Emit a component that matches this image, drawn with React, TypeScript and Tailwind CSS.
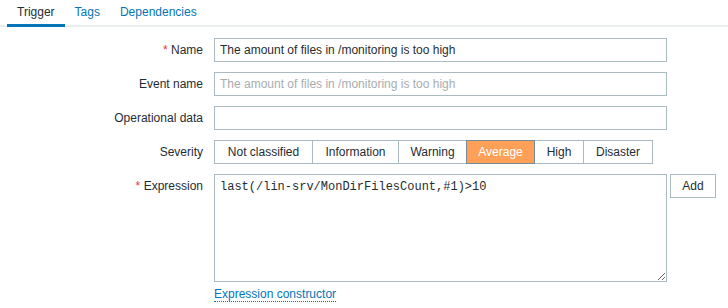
import React from "react";

const severities = [
  { label: "Not classified", w: "w-[99px]" },
  { label: "Information", w: "w-[87px]" },
  { label: "Warning", w: "w-[69px]" },
  { label: "Average", w: "w-[69px]", active: true },
  { label: "High", w: "w-[50px]" },
  { label: "Disaster", w: "w-[70px]" },
];

const Label = ({ text, required }: { text: string; required?: boolean }) => (
  <div className="w-[203px] shrink-0 text-right pt-[5px] leading-[14px]">
    {required && <span className="text-[#e33734]">* </span>}
    {text}
  </div>
);

const TextInput = ({
  value,
  placeholder,
}: {
  value?: string;
  placeholder?: string;
}) => (
  <input
    className="w-[453px] h-[24px] border border-[#acbbc2] bg-white px-[5px] text-[12px] text-[#1f2c33] outline-none placeholder:text-[#a7adb0]"
    style={{ fontFamily: "inherit" }}
    defaultValue={value}
    placeholder={placeholder}
    readOnly
  />
);

export default function App() {
  return (
    <div
      className="w-[728px] h-[308px] bg-white text-[12px] text-[#1f2c33] overflow-hidden"
      style={{ fontFamily: '"Liberation Sans", Arial, sans-serif' }}
    >
      <div className="flex h-[27px] border-b-2 border-[#ebeef0] pl-[7px]">
        <div className="px-[10px] pt-[5px] leading-[14px] border-b-[3px] border-[#0275b8] -mb-[2px]">
          Trigger
        </div>
        <div className="px-[10px] pt-[5px] leading-[14px] text-[#0275b8]">
          Tags
        </div>
        <div className="px-[10px] pt-[5px] leading-[14px] text-[#0275b8]">
          Dependencies
        </div>
      </div>

      <div className="flex flex-col gap-[10px] pt-[11px]">
        <div className="flex items-start gap-[11px]">
          <Label text="Name" required />
          <TextInput value="The amount of files in /monitoring is too high" />
        </div>
        <div className="flex items-start gap-[11px]">
          <Label text="Event name" />
          <TextInput placeholder="The amount of files in /monitoring is too high" />
        </div>
        <div className="flex items-start gap-[11px]">
          <Label text="Operational data" />
          <TextInput />
        </div>
        <div className="flex items-start gap-[11px]">
          <Label text="Severity" />
          <div className="flex">
            {severities.map((s, i) => (
              <div
                key={s.label}
                className={`${s.w} h-[24px] flex items-center justify-center border ${
                  i > 0 ? "-ml-px" : ""
                } ${
                  s.active
                    ? "bg-[#ffa059] border-[#768d99] text-white relative"
                    : "bg-white border-[#acbbc2]"
                }`}
              >
                {s.label}
              </div>
            ))}
          </div>
        </div>
        <div className="flex items-start gap-[11px]">
          <Label text="Expression" required />
          <div className="flex flex-col">
            <div className="flex items-start gap-[3px]">
              <textarea
                className="w-[453px] h-[108px] border border-[#acbbc2] bg-white px-[5px] pt-[5px] text-[12px] leading-[14px] text-[#1f2c33] outline-none"
                style={{ fontFamily: '"Liberation Mono", "Courier New", monospace' }}
                defaultValue="last(/lin-srv/MonDirFilesCount,#1)>10"
                readOnly
              />
              <button className="w-[46px] h-[24px] border border-[#acbbc2] bg-white text-[12px] text-[#1f2c33]">
                Add
              </button>
            </div>
            <div className="mt-[5px] leading-[14px]">
              <span className="text-[#0275b8] border-b border-dotted border-[#0275b8]">
                Expression constructor
              </span>
            </div>
          </div>
        </div>
      </div>
    </div>
  );
}
